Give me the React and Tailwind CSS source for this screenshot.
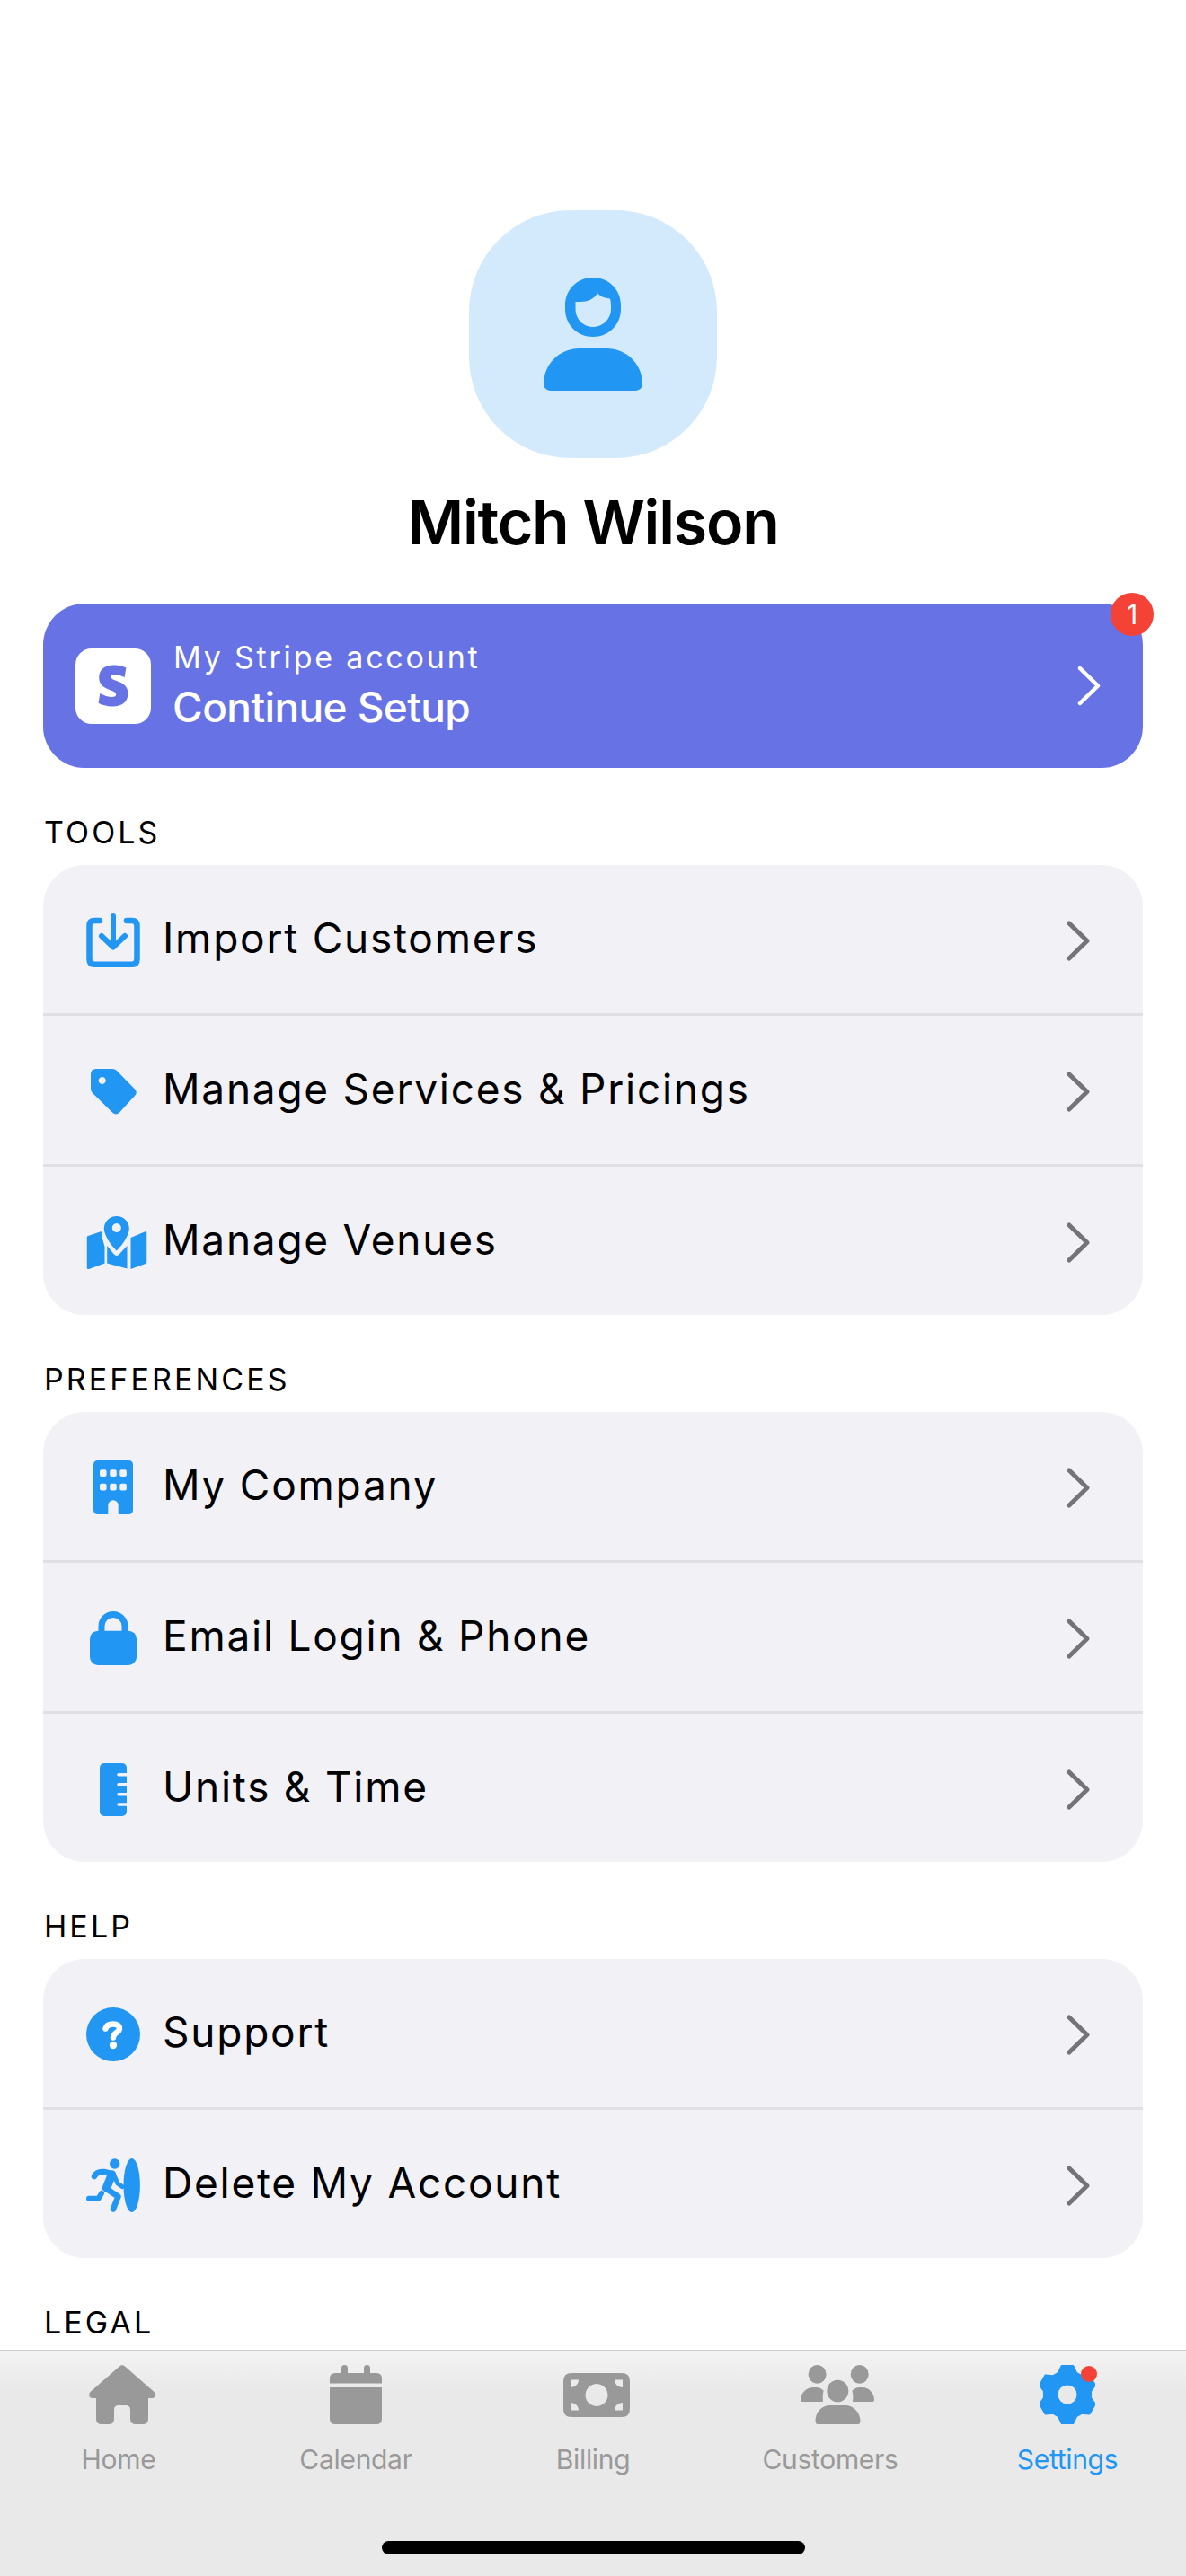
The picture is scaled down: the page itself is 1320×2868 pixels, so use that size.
import React from "react";

const BLUE = "#2196f3";
const GRAY = "#999999";

function Chevron({ color = "#737378", w = 5 }) {
  return (
    <svg width="26" height="45" viewBox="0 0 26 45" fill="none" className="shrink-0">
      <path d="M3 3 L23 22.5 L3 42" stroke={color} strokeWidth={w} strokeLinecap="round" strokeLinejoin="round" />
    </svg>
  );
}

const ImportIcon = () => (
  <svg width="60" height="60" viewBox="0 0 60 60" fill="none">
    <path d="M15 8 H9 Q3.5 8 3.5 13.5 V51 Q3.5 56.7 9 56.7 H51 Q56.5 56.7 56.5 51 V13.5 Q56.5 8 51 8 H45" stroke={BLUE} strokeWidth="6.5" strokeLinecap="round" />
    <path d="M30 3 V37 M17 25 L30 37.5 L43 25" stroke={BLUE} strokeWidth="6" strokeLinecap="round" strokeLinejoin="round" />
  </svg>
);

const TagIcon = () => (
  <svg width="51" height="51" viewBox="0 0 51 51">
    <path fillRule="evenodd" fill={BLUE} d="M6 0 H24 Q27 0 29 2 L49 22.5 Q52.5 26.5 49 30 L32 48.5 Q28 52.5 24 48.5 L2 27 Q0 25 0 22 V6 Q0 0 6 0Z M12.7 9 a4 4 0 1 0 .01 0Z" />
  </svg>
);

const MapIcon = () => (
  <svg width="67" height="59" viewBox="0 0 67 59" className="shrink-0 translate-x-[3.5px]">
    <path fillRule="evenodd" fill={BLUE} d="M33.3 0 C41 0 47.3 6 47.3 14 C47.3 21 40 32 33.3 38.5 C26.6 32 19.3 21 19.3 14 C19.3 6 25.6 0 33.3 0Z M33.3 8 a5 5 0 1 0 .01 0Z" />
    <path fill={BLUE} d="M1.5 22 L15.5 17.3 Q17 17 17 19 L17.5 25 L20 34 V52.5 L2.5 59 Q0 59.5 0 57 V24 Q0 22.5 1.5 22Z" />
    <path fill={BLUE} d="M22.7 33 L30 42 Q33.3 46 36.6 42 L45 33 V58.5 L22.7 52.5Z" />
    <path fill={BLUE} d="M49 24 L65 17.3 Q67 16.8 67 19 V51 Q67 52.5 65.5 53 L49 59Z" />
  </svg>
);

const CompanyIcon = () => (
  <svg width="44" height="60" viewBox="0 0 44 60">
    <path fillRule="evenodd" fill={BLUE} d="M5 0 H39 Q44 0 44 5 V55 Q44 60 39 60 H27.7 V50 A5.7 5.7 0 0 0 16.3 50 V60 H5 Q0 60 0 55 V5 Q0 0 5 0Z
      M9 10.3 h3.6 q2 0 2 2 v3.8 q0 2 -2 2 h-3.6 q-2 0 -2 -2 v-3.8 q0 -2 2 -2Z
      M20.2 10.3 h3.6 q2 0 2 2 v3.8 q0 2 -2 2 h-3.6 q-2 0 -2 -2 v-3.8 q0 -2 2 -2Z
      M31.3 10.3 h3.6 q2 0 2 2 v3.8 q0 2 -2 2 h-3.6 q-2 0 -2 -2 v-3.8 q0 -2 2 -2Z
      M9 25.7 h3.6 q2 0 2 2 v3.8 q0 2 -2 2 h-3.6 q-2 0 -2 -2 v-3.8 q0 -2 2 -2Z
      M20.2 25.7 h3.6 q2 0 2 2 v3.8 q0 2 -2 2 h-3.6 q-2 0 -2 -2 v-3.8 q0 -2 2 -2Z
      M31.3 25.7 h3.6 q2 0 2 2 v3.8 q0 2 -2 2 h-3.6 q-2 0 -2 -2 v-3.8 q0 -2 2 -2Z" />
  </svg>
);

const LockIcon = () => (
  <svg width="52" height="60" viewBox="0 0 52 60" fill="none">
    <path d="M13 25 V16.5 a13 13 0 0 1 26 0 V25" stroke={BLUE} strokeWidth="7" />
    <rect x="0" y="21.7" width="52" height="38.3" rx="9" fill={BLUE} />
  </svg>
);

const RulerIcon = () => (
  <svg width="30" height="59" viewBox="0 0 30 59">
    <rect width="30" height="59" rx="5" fill={BLUE} />
    <path d="M21 12.7 H30 M21 23.7 H30 M21 34.7 H30 M21 46 H30" stroke="#f2f1f6" strokeWidth="3.5" strokeLinecap="round" />
  </svg>
);

const SupportIcon = () => (
  <svg width="60" height="60" viewBox="0 0 60 60" fill="none">
    <circle cx="30" cy="30" r="30" fill={BLUE} />
    <path d="M21.5 23.5 C22.5 19.5 26 18.5 30 18.5 C34.5 18.5 37 20.5 37 23.5 C37 28 30 28 30 33.5" stroke="#fff" strokeWidth="6.5" strokeLinecap="round" />
    <circle cx="30" cy="42" r="4.2" fill="#fff" />
  </svg>
);

const ExitIcon = () => (
  <svg width="60" height="60" viewBox="0 0 60 60" fill="none">
    <ellipse cx="50.7" cy="30" rx="9.2" ry="30" fill={BLUE} />
    <circle cx="31.7" cy="6" r="5.7" fill={BLUE} />
    <path d="M9 20 C11 15.5 15 14.5 20 15 L28 17" stroke={BLUE} strokeWidth="6.5" strokeLinecap="round" />
    <path d="M28.5 18 L22.5 33" stroke={BLUE} strokeWidth="9.5" strokeLinecap="round" />
    <path d="M31 19 L35 28 L40 31.5" stroke={BLUE} strokeWidth="5" strokeLinecap="round" strokeLinejoin="round" />
    <path d="M22.5 34 L35.5 42.5 L30 56.5" stroke={BLUE} strokeWidth="6.5" strokeLinecap="round" strokeLinejoin="round" />
    <path d="M3 44.7 H13.5 L17 39" stroke={BLUE} strokeWidth="6" strokeLinecap="round" strokeLinejoin="round" />
  </svg>
);

const HomeIcon = () => (
  <svg width="74" height="66" viewBox="0 0 74 66" className="ml-[8px]">
    <path fill={GRAY} d="M34 1.5 Q37 -1 40 1.5 L72.5 30 Q75 33 73 36 Q72 37 70 37 H66 V60 Q66 66 60 66 H52 Q46 66 46 60 V50 Q46 45 41 45 H33 Q28 45 28 50 V60 Q28 66 22 66 H14 Q8 66 8 60 V37 H4 Q2 37 1 36 Q-1 33 1.5 30Z" />
  </svg>
);

const CalendarIcon = () => (
  <svg width="58" height="66" viewBox="0 0 58 66">
    <path fill={GRAY} d="M13 9 V3.5 a3.5 3.5 0 0 1 7 0 V9 H38 V3.5 a3.5 3.5 0 0 1 7 0 V9 H52 Q58 9 58 15 V20.5 H0 V15 Q0 9 6 9Z" />
    <path fill={GRAY} d="M0 25 H58 V60 Q58 66 52 66 H6 Q0 66 0 60Z" />
  </svg>
);

const BillingIcon = () => (
  <svg width="74" height="66" viewBox="0 0 74 66" className="ml-[8px]">
    <path fillRule="evenodd" fill={GRAY} d="M9 9 H65 Q74 9 74 18 V49 Q74 58 65 58 H9 Q0 58 0 49 V18 Q0 9 9 9Z
      M37 21 a12.5 12.5 0 1 0 .01 0Z
      M8 16.5 H17 C17 21 13 25 8 25Z
      M66 16.5 H57 C57 21 61 25 66 25Z
      M8 50.5 H17 C17 46 13 42 8 42Z
      M66 50.5 H57 C57 46 61 42 66 42Z" />
  </svg>
);

const CustomersIcon = () => (
  <svg width="82" height="66" viewBox="0 0 82 66" className="ml-[16px]">
    <g fill={GRAY}>
      <ellipse cx="18.6" cy="10.4" rx="10" ry="10.4" />
      <ellipse cx="65.7" cy="10.4" rx="10" ry="10.4" />
      <ellipse cx="41.3" cy="29" rx="12" ry="12.3" />
      <path d="M19 66 H64 Q66.5 66 66.5 62 C66 52 58 45 50 45 H33 C24 45 16.5 52 16.5 62 Q16.5 66 19 66Z" />
      <path d="M2 41 H25 Q24 35 25.5 28.5 Q22 25 18 25 H14 C6 25 0 32 0 39 Q0 41 2 41Z" />
      <path d="M80.6 41 H58 Q59 35 57.5 28.5 Q61 25 65 25 H68.6 C76.6 25 82 32 82 39 Q82 41 80.6 41Z" />
    </g>
  </svg>
);

function gearPath() {
  const pts = [];
  for (let i = 0; i < 6; i++) {
    const a = (i * Math.PI) / 3;
    const rot = (x, y) => [(31 + x * Math.cos(a) - y * Math.sin(a)).toFixed(2), (33 + x * Math.sin(a) + y * Math.cos(a)).toFixed(2)];
    pts.push(rot(-9.5, -24), rot(-6, -31.5), rot(6, -31.5), rot(9.5, -24));
  }
  return "M" + pts.map((p) => p.join(" ")).join(" L") + "Z";
}

const SettingsIcon = () => (
  <div className="relative">
    <svg width="62" height="66" viewBox="0 0 62 66">
      <path d={gearPath()} fill={BLUE} stroke={BLUE} strokeWidth="3" strokeLinejoin="round" />
      <circle cx="31" cy="33" r="10.5" fill="#e9e9e9" />
    </svg>
    <div className="absolute top-[1px] left-[46px] w-[18px] h-[18px] rounded-full bg-[#f44336]" />
  </div>
);

function Row({ icon, label }) {
  return (
    <div className="h-[165px] flex items-center pl-[48px] pr-[59px]">
      <div className="w-[60px] flex justify-center mt-[3px]">{icon}</div>
      <span className="ml-[25px] mb-[3px] flex-1 text-[46px] leading-[46px] tracking-[1.75px] text-black">{label}</span>
      <div className="mt-[3px]">
        <Chevron />
      </div>
    </div>
  );
}

function Section({ title, items }) {
  return (
    <div>
      <div className="h-[108px] pt-[55px] pl-[49px] text-[34px] leading-[34px] tracking-[3.1px] text-black">{title}</div>
      <div className="mx-[48px] rounded-[46px] bg-[#f2f1f6] overflow-hidden">
        {items.map((it, i) => (
          <div key={it.label}>
            {i > 0 && <div className="h-[3px] bg-[#e0e0e2]" />}
            <Row icon={it.icon} label={it.label} />
          </div>
        ))}
      </div>
    </div>
  );
}

function Tab({ icon, label, active }) {
  return (
    <div className="flex flex-col items-center">
      <div className="h-[66px] flex items-center justify-center">{icon}</div>
      <span className={"mt-[21px] text-[30px] leading-[36px] tracking-[-0.3px] " + (active ? "text-[#2196f3]" : "text-[#999999]")}>{label}</span>
    </div>
  );
}

export default function App() {
  return (
    <div className="w-full h-[2868px] flex flex-col bg-white font-['Inter',sans-serif] overflow-hidden">
      <div className="flex-1 overflow-hidden pt-[234px]">
        <div className="flex flex-col items-center">
          <div className="w-[276px] h-[276px] rounded-[113px] bg-[#d3e9fc] flex items-center justify-center">
            <svg width="110" height="126" viewBox="0 0 110 126">
              <path fillRule="evenodd" fill={BLUE} d="M55 0 C38 0 24 13 24 31 V35 C24 53 38 66 55 66 C72 66 86 53 86 35 V31 C86 13 72 0 55 0Z M35.5 27 H41 C49 27 56 24 60 17.5 C63 21 68 23 74 23.5 Q75 27 75 31 V35 C75 46 66 55 55 55 C44 55 35.5 46 35.5 35 V31 Q35.5 29 35.5 27Z" />
              <path fill={BLUE} d="M8 126 H102 C107 126 110 122 110 119 C110 96 92 79 70 79 H40 C18 79 0 96 0 119 C0 122 3 126 8 126Z" />
            </svg>
          </div>
          <div className="mt-[37px] text-[68px] leading-[68px] font-semibold tracking-[-1.2px] text-black">Mitch Wilson</div>
        </div>

        <div className="relative mt-[57px] mx-[48px] h-[183px] rounded-[46px] bg-[#6772e5] flex items-center pl-[36px] pr-[47px]">
          <div className="w-[84px] h-[84px] rounded-[18px] bg-white flex items-center justify-center">
            <svg width="46" height="47" viewBox="0 0 24 24">
              <path fill="#6772e5" d="M13.976 9.15c-2.172-.806-3.356-1.426-3.356-2.409 0-.831.683-1.305 1.901-1.305 2.227 0 4.515.858 6.09 1.631l.89-5.494C18.252.975 15.697 0 12.165 0 9.667 0 7.589.654 6.104 1.872 4.56 3.147 3.757 4.992 3.757 7.218c0 4.039 2.467 5.76 6.476 7.219 2.585.92 3.445 1.574 3.445 2.583 0 .98-.84 1.545-2.354 1.545-1.875 0-4.965-.921-6.99-2.109l-.9 5.555C5.175 22.99 8.385 24 11.714 24c2.641 0 4.843-.624 6.328-1.813 1.664-1.305 2.525-3.236 2.525-5.732 0-4.128-2.524-5.851-6.591-7.305z" />
            </svg>
          </div>
          <div className="ml-[24px] flex-1 text-white">
            <div className="text-[34px] leading-[34px] tracking-[2.8px] pl-[1px]">My Stripe account</div>
            <div className="mt-[13px] text-[46px] leading-[50px] font-medium tracking-[-0.6px]">Continue Setup</div>
          </div>
          <Chevron color="#ffffff" w={4.5} />
          <div className="absolute -top-[12px] -right-[12px] w-[48px] h-[48px] rounded-full bg-[#f44336] flex items-center justify-center text-white text-[30px] leading-[30px]">1</div>
        </div>

        <Section
          title="TOOLS"
          items={[
            { icon: <ImportIcon />, label: "Import Customers" },
            { icon: <TagIcon />, label: "Manage Services & Pricings" },
            { icon: <MapIcon />, label: "Manage Venues" },
          ]}
        />
        <Section
          title="PREFERENCES"
          items={[
            { icon: <CompanyIcon />, label: "My Company" },
            { icon: <LockIcon />, label: "Email Login & Phone" },
            { icon: <RulerIcon />, label: "Units & Time" },
          ]}
        />
        <Section
          title="HELP"
          items={[
            { icon: <SupportIcon />, label: "Support" },
            { icon: <ExitIcon />, label: "Delete My Account" },
          ]}
        />
        <div className="pt-[55px] pl-[49px] text-[34px] leading-[34px] tracking-[3.1px] text-black">LEGAL</div>
      </div>

      <div className="relative h-[252px] shrink-0 border-t-2 border-[#cccccc] bg-[linear-gradient(#f3f3f3,#e9e9e9_45px)] pt-[15px]">
        <div className="grid grid-cols-5">
          <Tab icon={<HomeIcon />} label="Home" />
          <Tab icon={<CalendarIcon />} label="Calendar" />
          <Tab icon={<BillingIcon />} label="Billing" />
          <Tab icon={<CustomersIcon />} label="Customers" />
          <Tab icon={<SettingsIcon />} label="Settings" active />
        </div>
        <div className="absolute left-[425px] bottom-[24px] w-[471px] h-[15px] rounded-full bg-black" />
      </div>
    </div>
  );
}
